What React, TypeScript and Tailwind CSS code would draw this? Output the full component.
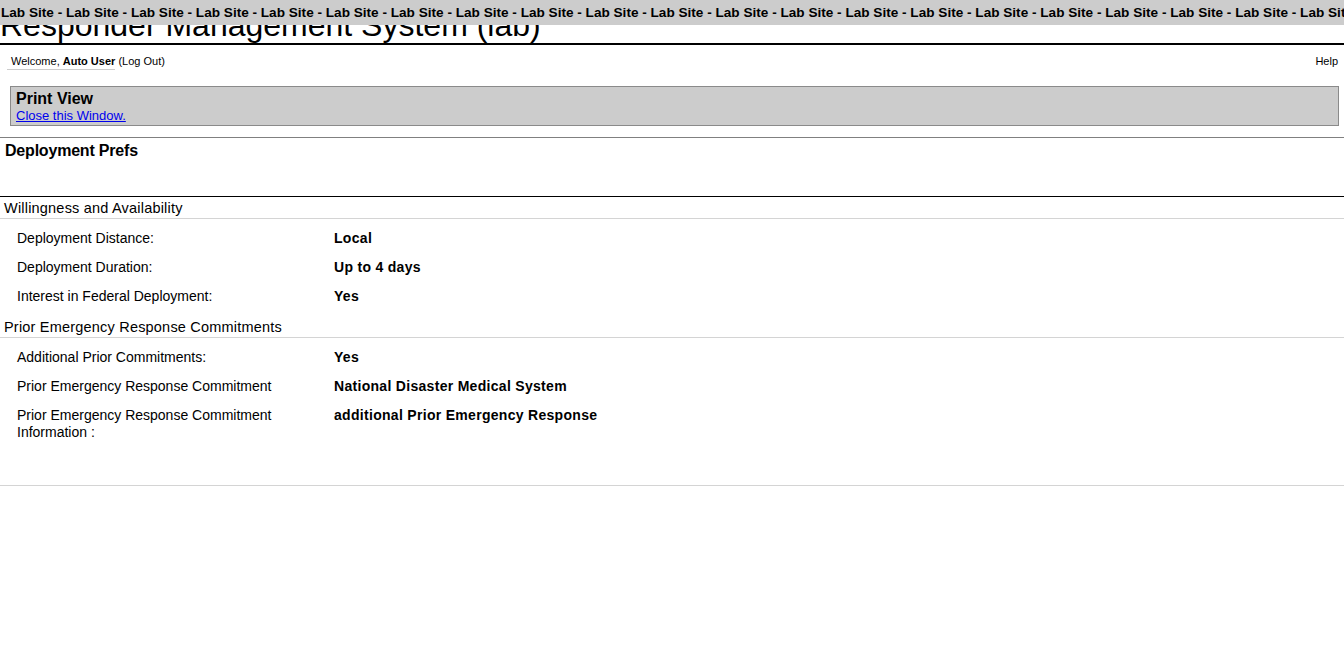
import React from "react";

const willingness = [
  { label: "Deployment Distance:", value: "Local" },
  { label: "Deployment Duration:", value: "Up to 4 days" },
  { label: "Interest in Federal Deployment:", value: "Yes" },
];

const commitments = [
  { label: "Additional Prior Commitments:", value: "Yes" },
  { label: "Prior Emergency Response Commitment", value: "National Disaster Medical System" },
  {
    label: "Prior Emergency Response Commitment Information :",
    value: "additional Prior Emergency Response",
  },
];

function Section({
  title,
  rows,
  last,
}: {
  title: string;
  rows: { label: string; value: string }[];
  last?: boolean;
}) {
  return (
    <div>
      <div className="pl-[4px] pt-[3px] pb-[2px] text-[14.5px] tracking-[0.2px] leading-[16px] border-b border-[#d4d4d4]">
        {title}
      </div>
      <div className={last ? "pt-[5px] pb-[38px]" : "pt-[5px] pb-[5px]"}>
        {rows.map((r) => (
          <div key={r.label} className="flex py-[6px] text-[14px] leading-[17px]">
            <div className="w-[334px] shrink-0 pl-[17px] pr-[10px]">{r.label}</div>
            <div className="font-bold tracking-[0.3px]">{r.value}</div>
          </div>
        ))}
      </div>
    </div>
  );
}

export default function App() {
  const banner = Array(24).fill("Lab Site").join(" - ");

  return (
    <div className="relative min-h-screen bg-white text-black font-['Liberation_Sans',Arial,sans-serif]">
      {/* lab site banner lies over the title */}
      <div className="absolute top-0 left-0 right-0 h-[25px] bg-[#cccccc] overflow-hidden whitespace-nowrap pl-[1px] text-[13.6px] leading-[25px] font-bold">
        {banner}
      </div>

      <h1 className="pt-[7px] text-[32px] leading-[36px] font-normal border-b-2 border-black whitespace-nowrap overflow-hidden">
        Responder Management System (lab)
      </h1>

      <div className="flex justify-between items-start pl-[7px] pr-[6px] pt-[10px] text-[11px] leading-[13px]">
        <div>
          <span className="inline-block pl-[4px] pb-[1px] border-b border-[#cccccc]">
            Welcome, <span className="font-bold">Auto User</span>
          </span>
          <span> (Log Out)</span>
        </div>
        <div>Help</div>
      </div>

      <div className="mt-[16px] ml-[10px] mr-[5px] border border-[#8a8a8a] bg-[#cccccc] pl-[5px] pt-[3px] pb-[1px]">
        <div className="text-[16px] leading-[18px] font-bold">Print View</div>
        <a href="#" className="block w-fit text-[13px] leading-[16px] text-[#0000ee] underline">
          Close this Window.
        </a>
      </div>

      <div className="mt-[11px] border-t border-[#808080] h-[59px] pl-[5px] pt-[4px]">
        <h2 className="text-[16px] leading-[18px] font-bold tracking-[-0.2px]">Deployment Prefs</h2>
      </div>

      <div className="border-t border-black">
        <Section title="Willingness and Availability" rows={willingness} />
        <Section title="Prior Emergency Response Commitments" rows={commitments} last />
        <div className="border-t border-[#d4d4d4]" />
      </div>
    </div>
  );
}
